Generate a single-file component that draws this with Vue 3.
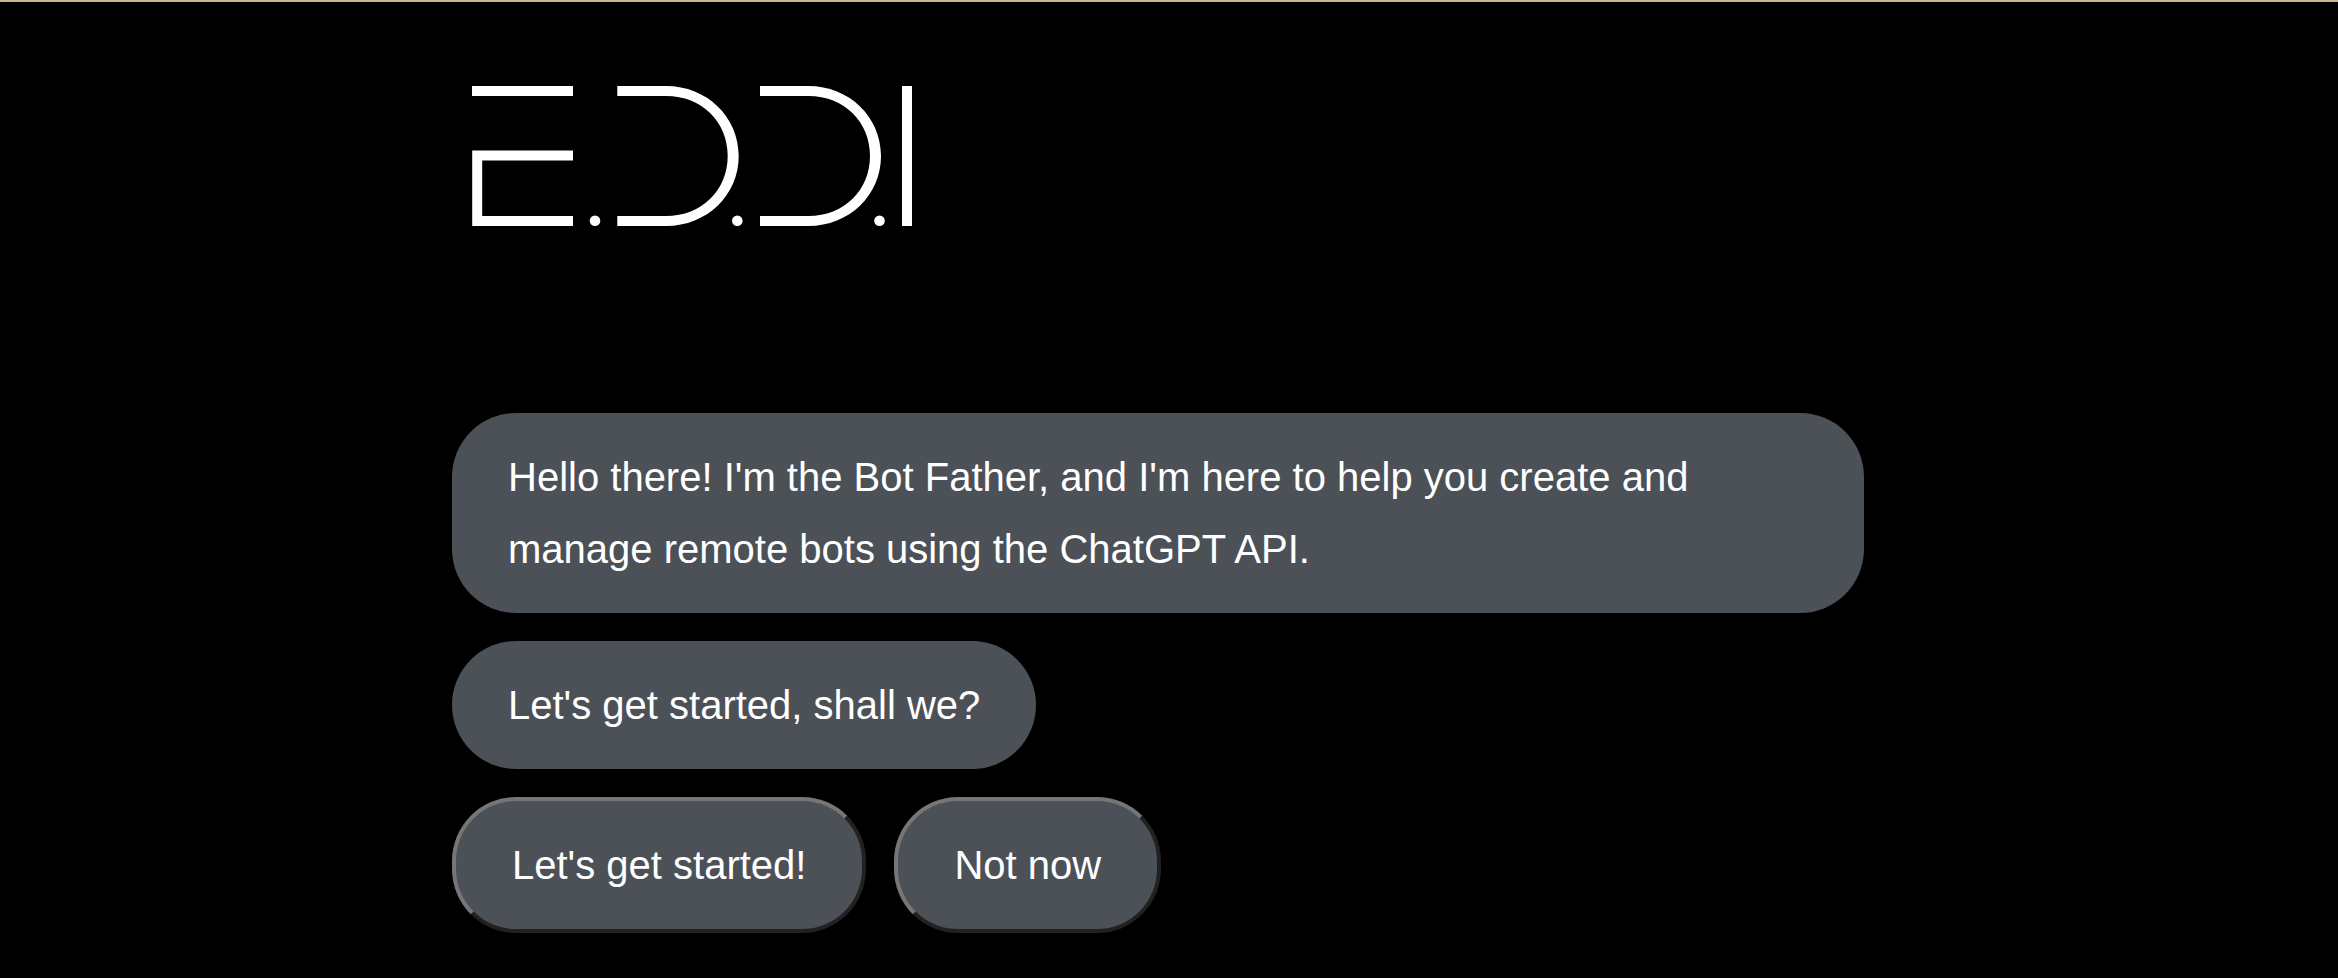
<script setup>
import { ref } from 'vue'

const messages = [
  "Hello there! I'm the Bot Father, and I'm here to help you create and manage remote bots using the ChatGPT API.",
  "Let's get started, shall we?",
]
const replies = ["Let's get started!", 'Not now']
const chosen = ref('')
</script>

<template>
  <div class="page">
    <main class="chat">
      <header class="header">
        <svg class="logo" viewBox="0 0 440 140" role="img" aria-label="E.D.D.I">
          <g fill="none" stroke="#fff" stroke-width="10">
            <path d="M0 5H101M101 69.5H5.2V135H101" />
            <path d="M435 0V140" />
          </g>
          <g fill="#fff">
            <path d="M145.3 0H194C235 0 266.7 31 266.7 70S235 140 194 140H145.3V130H194C230 130 255.7 104 255.7 70S230 10 194 10H145.3Z" />
            <path d="M288 0H336.3C377.3 0 409 31 409 70S377.3 140 336.3 140H288V130H336.3C372.3 130 398 104 398 70S372.3 10 336.3 10H288Z" />
            <circle cx="123" cy="134.7" r="5.3" />
            <circle cx="265.3" cy="134.7" r="5.3" />
            <circle cx="407.5" cy="134.7" r="5.3" />
          </g>
        </svg>
      </header>
      <section class="conversation" aria-label="Conversation">
        <p v-for="message in messages" :key="message" class="bubble">{{ message }}</p>
        <div class="replies">
          <button
            v-for="reply in replies"
            :key="reply"
            type="button"
            class="bubble reply"
            :aria-pressed="chosen === reply"
            @click="chosen = reply"
          >{{ reply }}</button>
        </div>
      </section>
    </main>
  </div>
</template>

<style>
body {
  margin: 0;
  background: #000;
}
</style>

<style scoped>
.page {
  box-sizing: border-box;
  min-height: 100vh;
  border-top: 2px solid #c9b596;
  background: #000;
  color: #fff;
  font: 40px/72px Helvetica, "Liberation Sans", Arial, sans-serif;
}

.chat {
  box-sizing: border-box;
  max-width: 1434px;
  margin: 0 auto;
  padding: 84px 22px 44px 0;
}

.header {
  margin-bottom: 187px;
  padding-left: 20px;
}

.logo {
  display: block;
  width: 440px;
  max-width: 100%;
}

.conversation {
  display: flex;
  flex-direction: column;
  align-items: flex-start;
  gap: 28px;
}

.bubble {
  box-sizing: border-box;
  max-width: 100%;
  margin: 0;
  padding: 28px 56px;
  border-radius: 64px;
  background: #4c5158;
  color: #fff;
  font: inherit;
}

.replies {
  display: flex;
  flex-wrap: wrap;
  gap: 28px;
}

.reply {
  border: 4px solid;
  border-color: #767676 #212121 #212121 #767676;
  cursor: pointer;
}
</style>
